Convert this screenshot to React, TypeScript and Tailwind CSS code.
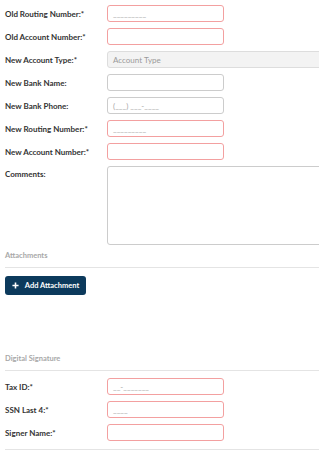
import React from "react";

type Row = {
  label: string;
  placeholder?: string;
  required?: boolean;
  kind?: "input" | "select";
};

const bankRows: Row[] = [
  { label: "Old Routing Number:*", placeholder: "_________", required: true },
  { label: "Old Account Number:*", required: true },
  { label: "New Account Type:*", placeholder: "Account Type", kind: "select" },
  { label: "New Bank Name:" },
  { label: "New Bank Phone:", placeholder: "(___) ___-____" },
  { label: "New Routing Number:*", placeholder: "_________", required: true },
  { label: "New Account Number:*", required: true },
];

const signatureRows: Row[] = [
  { label: "Tax ID:*", placeholder: "__-_______", required: true },
  { label: "SSN Last 4:*", placeholder: "____", required: true },
  { label: "Signer Name:*", required: true },
];

function FieldRow({ row }: { row: Row }) {
  return (
    <div className="flex items-center h-[17px] mb-[6px]">
      <label className="w-[102px] shrink-0 text-[8px] font-bold text-[#333333]">
        {row.label}
      </label>
      {row.kind === "select" ? (
        <div className="w-[260px] shrink-0 h-[17px] rounded-[3px] border border-[#dddddd] bg-[#f3f3f3] px-[5px] flex items-center text-[8px] text-[#9a9a9a]">
          {row.placeholder}
        </div>
      ) : (
        <div
          className={
            row.required
              ? "w-[117px] shrink-0 h-[17px] rounded-[3px] border border-[#f3a0a0] bg-white px-[5px] flex items-center text-[8px] text-[#a8a8a8]"
              : "w-[117px] shrink-0 h-[17px] rounded-[3px] border border-[#cccccc] bg-white px-[5px] flex items-center text-[8px] text-[#a8a8a8]"
          }
        >
          {row.placeholder}
        </div>
      )}
    </div>
  );
}

function SectionHeader({ title }: { title: string }) {
  return (
    <div className="w-[330px] border-b border-[#e4e4e4] pb-[6px]">
      <div className="text-[7.5px] leading-[10px] font-bold text-[#a8a8a8]">{title}</div>
    </div>
  );
}

export default function App() {
  return (
    <div
      className="w-[319px] h-[458px] overflow-hidden bg-white pl-[5px] pt-[5px]"
      style={{ fontFamily: "Lato, 'Open Sans', sans-serif" }}
    >
      {bankRows.map((r) => (
        <FieldRow key={r.label} row={r} />
      ))}

      {/* Comments */}
      <div className="flex items-start">
        <label className="w-[102px] shrink-0 text-[8px] font-bold text-[#333333] leading-[17px]">
          Comments:
        </label>
        <div className="w-[260px] shrink-0 h-[79px] rounded-[3px] border border-[#cccccc] bg-white" />
      </div>

      <div className="mt-[6px]">
        <SectionHeader title="Attachments" />
      </div>

      <button className="mt-[8px] h-[19px] w-[81px] rounded-[3px] bg-[#0c3a5c] flex items-center justify-center gap-[6px] text-white text-[7.5px] font-bold">
        <svg width="7" height="7" viewBox="0 0 8 8">
          <path d="M4 0.5v7M0.5 4h7" stroke="white" strokeWidth="1.8" />
        </svg>
        Add Attachment
      </button>

      <div className="mt-[59px]">
        <SectionHeader title="Digital Signature" />
      </div>

      <div className="mt-[7px]">
        {signatureRows.map((r) => (
          <FieldRow key={r.label} row={r} />
        ))}
      </div>

      <div className="mt-[8px] w-[330px] border-b border-[#e4e4e4]" />
    </div>
  );
}
